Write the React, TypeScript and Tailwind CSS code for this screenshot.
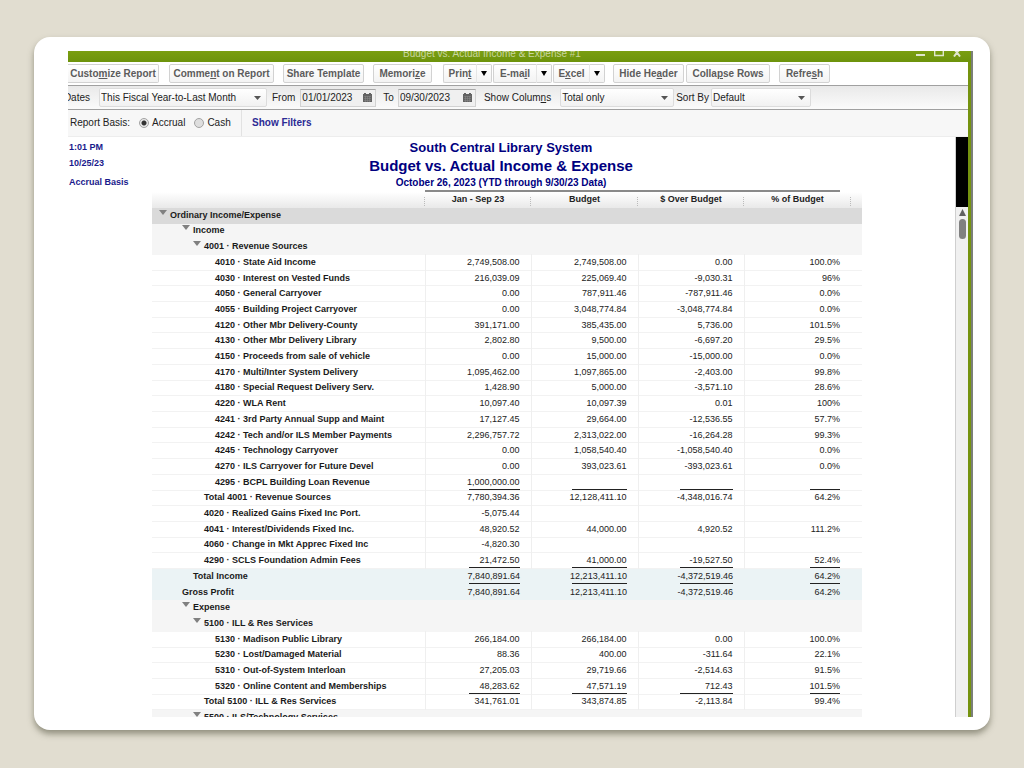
import { ReactNode, useState } from 'react';

type Kind = 'section' | 'group' | 'total' | 'line';

interface Row {
  label: string;
  level: number;
  kind: Kind;
  values?: [string, string, string, string];
  ruled?: boolean;
}

const group = (level: number, label: string): Row => ({ label, level, kind: 'group' });

const line = (
  level: number,
  label: string,
  actual: string,
  budget = '',
  over = '',
  percent = '',
  ruled = false,
): Row => ({ label, level, kind: 'line', values: [actual, budget, over, percent], ruled });

const ROWS: Row[] = [
  { label: 'Ordinary Income/Expense', level: 0, kind: 'section' },
  group(2, 'Income'),
  group(3, '4001 · Revenue Sources'),
  line(4, '4010 · State Aid Income', '2,749,508.00', '2,749,508.00', '0.00', '100.0%'),
  line(4, '4030 · Interest on Vested Funds', '216,039.09', '225,069.40', '-9,030.31', '96%'),
  line(4, '4050 · General Carryover', '0.00', '787,911.46', '-787,911.46', '0.0%'),
  line(4, '4055 · Building Project Carryover', '0.00', '3,048,774.84', '-3,048,774.84', '0.0%'),
  line(4, '4120 · Other Mbr Delivery-County', '391,171.00', '385,435.00', '5,736.00', '101.5%'),
  line(4, '4130 · Other Mbr Delivery Library', '2,802.80', '9,500.00', '-6,697.20', '29.5%'),
  line(4, '4150 · Proceeds from sale of vehicle', '0.00', '15,000.00', '-15,000.00', '0.0%'),
  line(4, '4170 · Multi/Inter System Delivery', '1,095,462.00', '1,097,865.00', '-2,403.00', '99.8%'),
  line(4, '4180 · Special Request Delivery Serv.', '1,428.90', '5,000.00', '-3,571.10', '28.6%'),
  line(4, '4220 · WLA Rent', '10,097.40', '10,097.39', '0.01', '100%'),
  line(4, '4241 · 3rd Party Annual Supp and Maint', '17,127.45', '29,664.00', '-12,536.55', '57.7%'),
  line(4, '4242 · Tech and/or ILS Member Payments', '2,296,757.72', '2,313,022.00', '-16,264.28', '99.3%'),
  line(4, '4245 · Technology Carryover', '0.00', '1,058,540.40', '-1,058,540.40', '0.0%'),
  line(4, '4270 · ILS Carryover for Future Devel', '0.00', '393,023.61', '-393,023.61', '0.0%'),
  line(4, '4295 · BCPL Building Loan Revenue', '1,000,000.00', '', '', '', true),
  line(3, 'Total 4001 · Revenue Sources', '7,780,394.36', '12,128,411.10', '-4,348,016.74', '64.2%'),
  line(3, '4020 · Realized Gains Fixed Inc Port.', '-5,075.44'),
  line(3, '4041 · Interest/Dividends Fixed Inc.', '48,920.52', '44,000.00', '4,920.52', '111.2%'),
  line(3, '4060 · Change in Mkt Apprec Fixed Inc', '-4,820.30'),
  line(3, '4290 · SCLS Foundation Admin Fees', '21,472.50', '41,000.00', '-19,527.50', '52.4%', true),
  {
    label: 'Total Income',
    level: 2,
    kind: 'total',
    values: ['7,840,891.64', '12,213,411.10', '-4,372,519.46', '64.2%'],
    ruled: true,
  },
  {
    label: 'Gross Profit',
    level: 1,
    kind: 'total',
    values: ['7,840,891.64', '12,213,411.10', '-4,372,519.46', '64.2%'],
  },
  group(2, 'Expense'),
  group(3, '5100 · ILL & Res Services'),
  line(4, '5130 · Madison Public Library', '266,184.00', '266,184.00', '0.00', '100.0%'),
  line(4, '5230 · Lost/Damaged Material', '88.36', '400.00', '-311.64', '22.1%'),
  line(4, '5310 · Out-of-System Interloan', '27,205.03', '29,719.66', '-2,514.63', '91.5%'),
  line(4, '5320 · Online Content and Memberships', '48,283.62', '47,571.19', '712.43', '101.5%', true),
  line(3, 'Total 5100 · ILL & Res Services', '341,761.01', '343,874.85', '-2,113.84', '99.4%'),
  group(3, '5500 · ILS/Technology Services'),
];

const INDENT = ['pl-[18px]', 'pl-[30px]', 'pl-[41px]', 'pl-[52px]', 'pl-[63px]'];

const ROW_STYLE: Record<Kind, string> = {
  section: 'border-b border-[#dadada] bg-[#dadada]',
  group: 'border-b border-[#f5f5f5] bg-[#f5f5f5]',
  total: 'border-b border-[#ebf3f5] bg-[#ebf3f5]',
  line: 'border-b border-[#f2f2f2]',
};

const RULE_WIDTH = ['w-[51px]', 'w-[55px]', 'w-[53px]', 'w-[30px]'];

const HEADINGS = ['Jan - Sep 23', 'Budget', '$ Over Budget', '% of Budget'];

const BUTTON =
  'h-[19px] rounded-xs border border-[#d2d2d2] bg-linear-to-b from-white to-[#f3f3f3] text-center font-bold whitespace-nowrap text-[#5c5c5c]';

const FIELD =
  'h-[19px] w-full appearance-none rounded-xs border border-[#dcdcdc] bg-linear-to-b from-white to-[#f1f1f1] pl-px text-[#222] outline-none';

function ToolButton({ width, children }: { width: string; children: ReactNode }) {
  return (
    <button type="button" className={`${BUTTON} ${width}`}>
      {children}
    </button>
  );
}

function SplitButton({ width, name, children }: { width: string; name: string; children: ReactNode }) {
  return (
    <div className={`flex ${width}`}>
      <button type="button" className={`${BUTTON} flex-1 rounded-r-none border-r-0`}>
        {children}
      </button>
      <button
        type="button"
        aria-label={`${name} options`}
        className={`${BUTTON} flex w-[16px] items-center justify-center rounded-l-none border-l-[#e6e6e6]`}
      >
        <svg width="6" height="5" viewBox="0 0 6 5">
          <path d="M0 0h6L3 5z" fill="#000" />
        </svg>
      </button>
    </div>
  );
}

function DropDown({ id, width, value }: { id: string; width: string; value: string }) {
  return (
    <div className={`relative ${width}`}>
      <select id={id} className={FIELD} defaultValue={value}>
        <option>{value}</option>
      </select>
      <svg className="pointer-events-none absolute top-[8px] right-[6px]" width="7" height="4" viewBox="0 0 7 4">
        <path d="M0 0h7L3.500 4z" fill="#555" />
      </svg>
    </div>
  );
}

function DateField({ id, width, value }: { id: string; width: string; value: string }) {
  return (
    <div className={`relative ${width}`}>
      <input
        id={id}
        type="text"
        defaultValue={value}
        className="h-[18px] w-full border border-[#d2d2d2] border-t-[#a8a8a8] bg-[#f0f0f0] pl-px text-[#222] outline-none"
      />
      <svg className="absolute top-[4px] right-[4px]" width="9" height="9" viewBox="0 0 9 9">
        <path d="M0 1h1V0h2v1h3V0h2v1h1v8H0z" fill="#636363" />
        <path d="M1 3.500h7M1 5.500h7M1 7.500h7M2.500 3v6M4.500 3v6M6.500 3v6" stroke="#8c8c8c" strokeWidth=".5" />
      </svg>
    </div>
  );
}

function Radio({ label, checked, onSelect }: { label: string; checked: boolean; onSelect: () => void }) {
  return (
    <label className="flex items-center gap-[3px]">
      <input
        type="radio"
        name="basis"
        checked={checked}
        onChange={onSelect}
        className="size-[10px] appearance-none rounded-full border border-[#a3a3a3] bg-[#dedede] checked:bg-[radial-gradient(#333_0_2px,#e8e8e8_3px)]"
      />
      {label}
    </label>
  );
}

function Grip() {
  return (
    <svg className="absolute top-[5px] right-0" width="1" height="9" viewBox="0 0 1 9">
      <path d="M0 0h1v1H0zM0 2h1v1H0zM0 4h1v1H0zM0 6h1v1H0zM0 8h1v1H0z" fill="#bbb" />
    </svg>
  );
}

function ReportTable() {
  return (
    <table className="w-[710px] shrink-0 table-fixed border-collapse text-[9px] leading-[11px] whitespace-nowrap">
      <colgroup>
        <col className="w-[273px]" />
        <col className="w-[106px]" />
        <col className="w-[107px]" />
        <col className="w-[106px]" />
        <col className="w-[107px]" />
        <col className="w-[11px]" />
      </colgroup>
      <thead>
        <tr className="h-[16px] bg-linear-to-b from-white to-[#e9e9e9] align-top">
          <td className="relative p-0">
            <Grip />
          </td>
          {HEADINGS.map((heading) => (
            <th key={heading} scope="col" className="relative px-0 pt-[2px] pb-0 font-bold text-[#222]">
              {heading}
              <Grip />
            </th>
          ))}
          <td className="p-0" />
        </tr>
      </thead>
      <tbody className="h-[518px]">
        {ROWS.map((row) => {
          const parent = row.kind === 'section' || row.kind === 'group';
          const edge = row.kind === 'line' ? 'border-l border-l-[#efefef]' : '';
          return (
            <tr key={row.label} className={ROW_STYLE[row.kind]}>
              <th scope="row" className={`py-0 text-left font-bold text-[#1a1a1a] ${INDENT[row.level]}`}>
                <span className="relative">
                  {parent && (
                    <svg className="absolute top-0 left-[-11px]" width="8" height="5" viewBox="0 0 8 5">
                      <path d="M0 0h8L4 5z" fill="#808080" />
                    </svg>
                  )}
                  {row.label}
                </span>
              </th>
              {HEADINGS.map((heading, i) => (
                <td key={heading} className={`relative py-0 pr-[11px] pl-0 text-right text-[#222] ${edge}`}>
                  {row.values?.[i]}
                  {row.ruled && (
                    <span className={`absolute right-[11px] bottom-0 h-px bg-[#222] ${RULE_WIDTH[i]}`} />
                  )}
                </td>
              ))}
              <td className="p-0" />
            </tr>
          );
        })}
      </tbody>
    </table>
  );
}

export default function App() {
  const [basis, setBasis] = useState('Accrual');

  return (
    <div className="h-screen bg-[#e1ddd0] px-[34px] pt-[37px] pb-[38px] font-['Liberation_Sans',Arial,sans-serif] text-[10px] leading-[12px]">
      <div className="h-full overflow-hidden rounded-2xl bg-white pt-[14px] pr-[17px] pb-[13px] pl-[34px] shadow-[0_4px_6px_0_rgba(80,80,60,0.55)]">
        <main className="flex h-full flex-col overflow-hidden border-r-2 border-[#7b7f78]">
          <header className="flex h-[11px] shrink-0 items-end overflow-hidden bg-linear-to-b from-[#7a9e10] to-[#6d930c]">
            <h1 className="flex-1 pb-[3px] text-center leading-[10px] text-[#c9d6a0]">
              Budget vs. Actual Income &amp; Expense #1
            </h1>
            <div className="flex w-[55px] items-end gap-[9px] pb-[5px]">
              <button type="button" aria-label="Minimize">
                <svg className="block" width="9" height="6" viewBox="0 0 9 6">
                  <path d="M0 3h9v2H0z" fill="#dfe6cc" />
                </svg>
              </button>
              <button type="button" aria-label="Maximize">
                <svg className="block" width="10" height="6" viewBox="0 0 10 6">
                  <path d="M.7 0v4.500h8.600V0" fill="none" stroke="#dfe6cc" strokeWidth="1.400" />
                </svg>
              </button>
              <button type="button" aria-label="Close">
                <svg className="block" width="8" height="6" viewBox="0 0 8 6">
                  <path d="M1 5.500 4 1.500l3 4M1.500-1.500 4 1.500l2.500-3" fill="none" stroke="#dfe6cc" strokeWidth="2" />
                </svg>
              </button>
            </div>
          </header>

          <div className="flex min-h-0 flex-1 flex-col border-r-3 border-[#75930f]">
            <div className="flex h-[24px] shrink-0 items-center border-b border-[#a0a0a0] bg-white">
              <button type="button" className={`${BUTTON} w-[91px] rounded-l-none border-l-0`}>
                Custo<u>m</u>ize Report
              </button>
              <div className="ml-[10px] flex gap-[9px]">
                <ToolButton width="w-[105px]">
                  Comme<u>n</u>t on Report
                </ToolButton>
                <ToolButton width="w-[81px]">Share Template</ToolButton>
                <ToolButton width="w-[59px]">
                  Memori<u>z</u>e
                </ToolButton>
              </div>
              <div className="ml-[11px] flex gap-px">
                <SplitButton width="w-[49px]" name="Print">
                  Prin<u>t</u>
                </SplitButton>
                <SplitButton width="w-[59px]" name="E-mail">
                  E-ma<u>i</u>l
                </SplitButton>
                <SplitButton width="w-[52px]" name="Excel">
                  E<u>x</u>cel
                </SplitButton>
              </div>
              <div className="ml-[8px] flex gap-[2px]">
                <ToolButton width="w-[71px]">
                  Hide He<u>a</u>der
                </ToolButton>
                <ToolButton width="w-[84px]">
                  Colla<u>p</u>se Rows
                </ToolButton>
              </div>
              <div className="ml-[9px] flex">
                <ToolButton width="w-[51px]">
                  Refre<u>s</u>h
                </ToolButton>
              </div>
            </div>

            <div className="flex h-[24px] shrink-0 items-center border-b border-[#a0a0a0] bg-linear-to-b from-[#e9e9e9] to-[#fbfbfb] whitespace-nowrap text-[#222]">
              <label htmlFor="dates" className="flex w-[22px] justify-end">
                Dates
              </label>
              <div className="ml-[9px] flex items-center gap-[5px]">
                <DropDown id="dates" width="w-[168px]" value="This Fiscal Year-to-Last Month" />
                <label htmlFor="from">From</label>
                <DateField id="from" width="w-[76px]" value="01/01/2023" />
              </div>
              <div className="ml-[7px] flex items-center gap-[4px]">
                <label htmlFor="to">To</label>
                <DateField id="to" width="w-[78px]" value="09/30/2023" />
              </div>
              <div className="ml-[8px] flex items-center gap-[9px]">
                <label htmlFor="columns">
                  Show Colum<u>n</u>s
                </label>
                <DropDown id="columns" width="w-[114px]" value="Total only" />
              </div>
              <div className="ml-[2px] flex items-center gap-[2px]">
                <label htmlFor="sort">Sort By</label>
                <DropDown id="sort" width="w-[100px]" value="Default" />
              </div>
            </div>

            <div className="flex h-[27px] shrink-0 items-center border-b border-[#ededed] bg-[#f7f7f7] text-[#222]">
              <div
                role="radiogroup"
                aria-labelledby="basis-label"
                className="flex h-full w-[174px] items-center gap-[9px] border-r border-[#e2e2e2] pl-[2px]"
              >
                <span id="basis-label">Report Basis:</span>
                <Radio label="Accrual" checked={basis === 'Accrual'} onSelect={() => setBasis('Accrual')} />
                <Radio label="Cash" checked={basis === 'Cash'} onSelect={() => setBasis('Cash')} />
              </div>
              <a href="#filters" className="ml-[10px] font-bold text-[#2b2b94]">
                Show Filters
              </a>
            </div>

            <div className="flex min-h-0 flex-1">
              <section className="flex min-w-0 flex-1 overflow-hidden">
                <div className="flex w-[84px] shrink-0 flex-col pt-[4px] pl-px text-[9px] font-bold text-[#1a1a8c]">
                  <span>1:01 PM</span>
                  <span className="mt-[4px]">10/25/23</span>
                  <span className="mt-[7px]">Accrual Basis</span>
                </div>
                <div className="flex min-w-0 flex-col">
                  <div className="w-[698px] shrink-0 pt-[3px] text-center font-bold text-[#000080]">
                    <p className="text-[13px] leading-[16px]">South Central Library System</p>
                    <h2 className="text-[15px] leading-[20px]">Budget vs. Actual Income &amp; Expense</h2>
                    <p className="leading-[14px]">October 26, 2023 (YTD through 9/30/23 Data)</p>
                  </div>
                  <div className="ml-[273px] h-[2px] w-[415px] shrink-0 bg-[#8a8a8a]" />
                  <ReportTable />
                </div>
              </section>
              <aside className="flex w-[13px] shrink-0 flex-col border-l border-[#cfcfcf] bg-[#f0f0f0]">
                <div className="h-[70px] shrink-0 bg-black" />
                <div className="flex flex-col items-center gap-[3px] pt-[2px]">
                  <svg width="7" height="7" viewBox="0 0 7 7">
                    <path d="M3.500 0 7 7H0z" fill="#606060" />
                  </svg>
                  <div className="h-[20px] w-[7px] rounded-full bg-[#808080]" />
                </div>
              </aside>
            </div>
          </div>
        </main>
      </div>
    </div>
  );
}
